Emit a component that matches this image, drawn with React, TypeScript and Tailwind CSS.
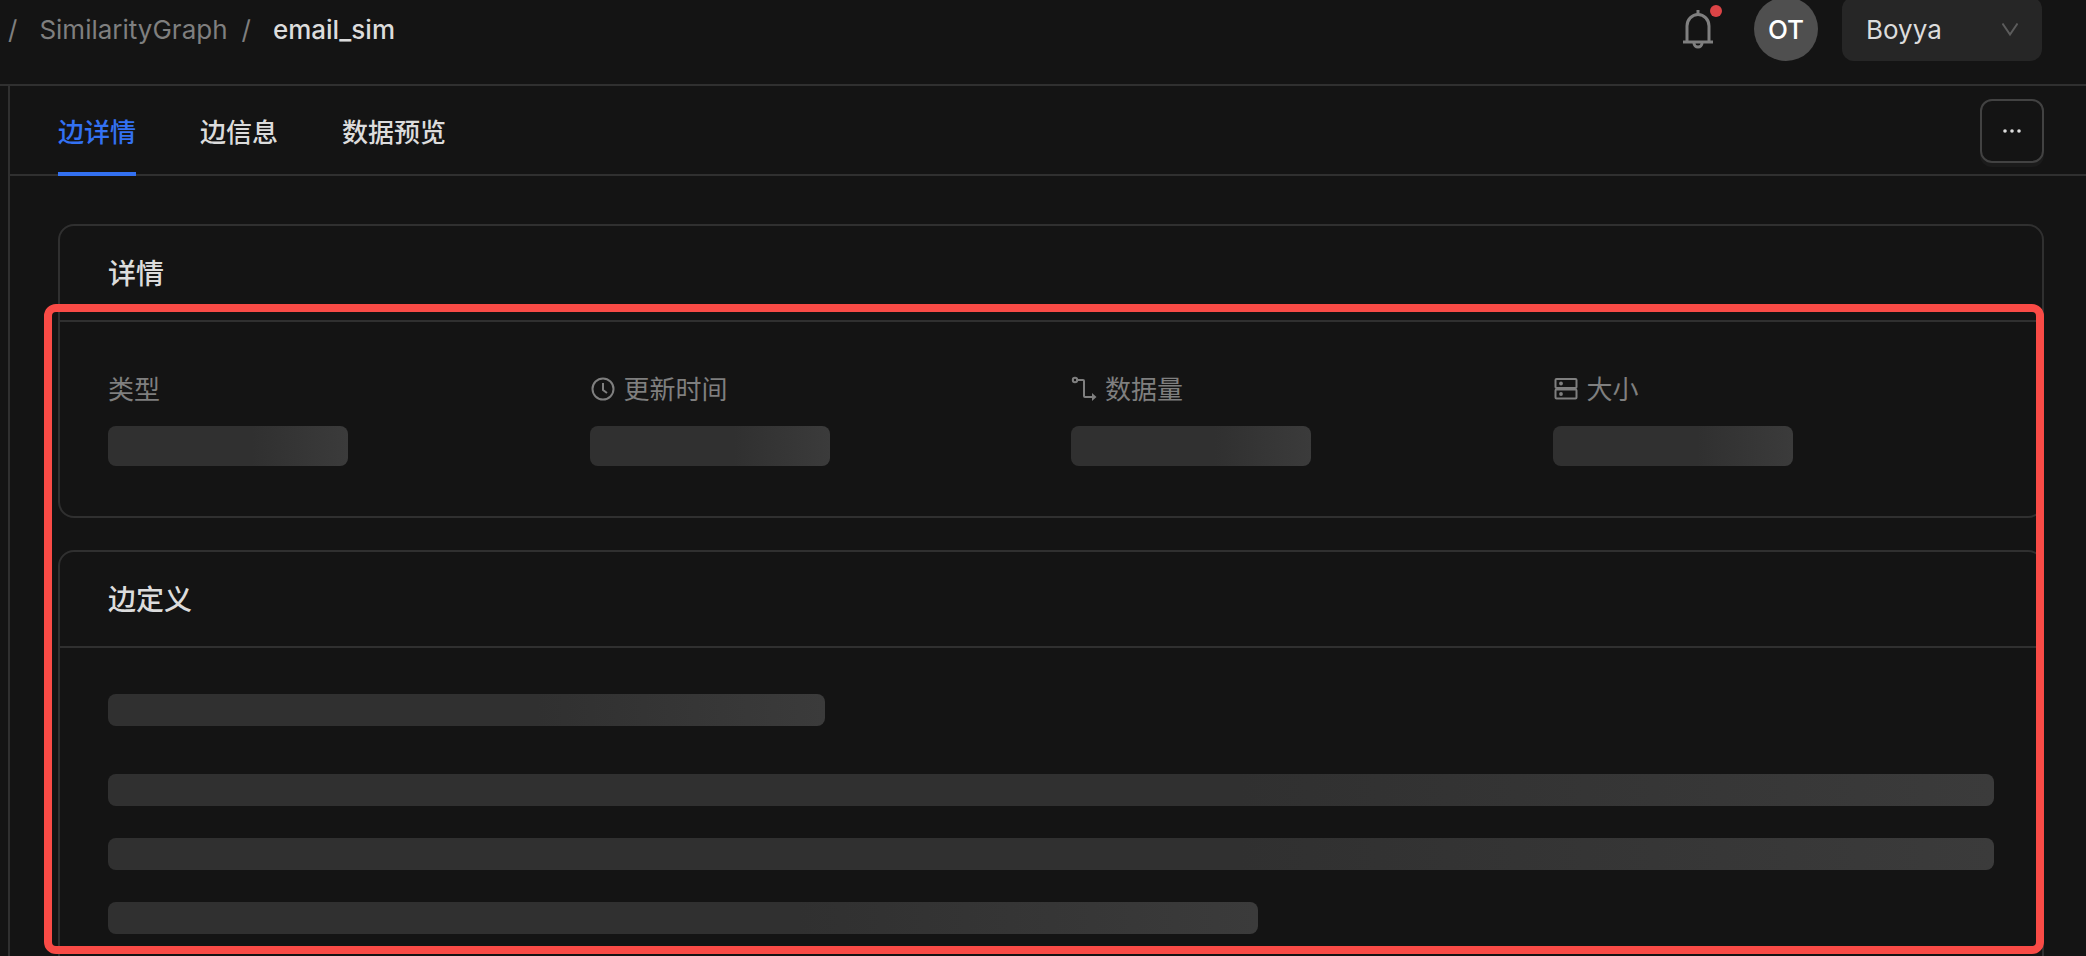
import React, { useState } from 'react';

const BellIcon = () => (
  <svg width="32" height="40" viewBox="0 0 32 40" fill="none" stroke="currentColor" strokeWidth="3">
    <path d="M16 1v5" />
    <path d="M5 33V17a11 11.500 0 0 1 22 0V33" />
    <path d="M1 33h30" />
    <path d="M12 34a4 4 0 0 0 8 0" />
  </svg>
)

const ClockIcon = () => (
  <svg width="26" height="26" viewBox="0 0 26 26" fill="none" stroke="currentColor" strokeWidth="2">
    <circle cx="13" cy="13" r="10.500" />
    <path d="M13 7v7l4 3" />
  </svg>
)

const FlowIcon = () => (
  <svg width="26" height="26" viewBox="0 0 26 26" fill="none" stroke="currentColor" strokeWidth="2">
    <circle cx="4" cy="4" r="2.200" />
    <path d="M6.500 4H12a1 1 0 0 1 1 1v15a1 1 0 0 0 1 1h8" />
    <path d="M21 17l4.500 4-4.500 4z" fill="currentColor" stroke="none" />
  </svg>
)

const ServerIcon = () => (
  <svg width="26" height="26" viewBox="0 0 26 26" fill="none" stroke="currentColor" strokeWidth="2">
    <rect x="2.500" y="3" width="21" height="9" rx="1" />
    <rect x="2.500" y="13.500" width="21" height="9" rx="1" />
    <circle cx="8" cy="7.500" r="1.900" fill="currentColor" stroke="none" />
    <circle cx="8" cy="18" r="1.900" fill="currentColor" stroke="none" />
  </svg>
)

const Skeleton = ({ className }: { className: string }) => (
  <div className={`rounded-lg bg-linear-to-r from-[#303030] from-60% to-[#3b3b3b] ${className}`} />
)

const Card = ({ title, children }: { title: string, children: React.ReactNode }) => (
  <section className="rounded-2xl border-2 border-[#303030]">
    <h2 className="flex h-24 items-center border-b-2 border-[#303030] px-12 pt-0.5 text-[28px] font-medium text-[#dcdcdc]">{title}</h2>
    {children}
  </section>
)

const tabs = ["边详情", "边信息", "数据预览"]

const fields = [
  { label: "类型", icon: null },
  { label: "更新时间", icon: <ClockIcon /> },
  { label: "数据量", icon: <FlowIcon /> },
  { label: "大小", icon: <ServerIcon /> },
]

const App = (): React.JSX.Element => {
  const [activeTab, setActiveTab] = useState<string>(tabs[0])

  return (
    <div className="relative flex h-screen flex-col overflow-hidden bg-[#141414] font-[Inter,'Noto_Sans_CJK_SC',sans-serif] text-[26px] text-[#dcdcdc]">
      <header className="-mt-[26px] flex h-28 shrink-0 items-center justify-between border-b-2 border-[#303030] pr-11 pl-2">
        <nav className="flex items-center gap-3.5 text-[#7f7f7f]">
          <span className="mr-2">/</span>
          <a href="#graph">SimilarityGraph</a>
          <span className="mr-2">/</span>
          <span className="font-medium text-[#dcdcdc]">email_sim</span>
        </nav>
        <div className="flex items-center">
          <button className="relative mr-10 text-[#7f7f7f]" aria-label="通知">
            <BellIcon />
            <span className="absolute -top-1 -right-2 size-3 rounded-full bg-[#dc4446]" />
          </button>
          <div className="mr-6 flex size-16 items-center justify-center rounded-full bg-[#4f4f4f] font-medium text-white">OT</div>
          <div className="relative">
            <select aria-label="Boyya" className="h-16 w-50 appearance-none rounded-xl bg-[#262626] px-6">
              <option>Boyya</option>
            </select>
            <svg className="pointer-events-none absolute top-6 right-6 text-[#5c5c5c]" width="16" height="16" viewBox="0 0 16 16" fill="none" stroke="currentColor" strokeWidth="2">
              <path d="M0.500 2.500l7.500 11 7.500-11" />
            </svg>
          </div>
        </div>
      </header>

      <main className="ml-2 min-h-0 flex-1 border-l-2 border-[#303030]">
        <div className="flex h-[90px] items-center justify-between border-b-2 border-[#303030] pr-[42px] pl-12">
          <div className="flex h-full gap-16" role="tablist">
            {tabs.map((tab) => (
              <button
                key={tab}
                role="tab"
                aria-selected={activeTab === tab}
                onClick={() => setActiveTab(tab)}
                className={`-mb-0.5 border-b-4 pt-1.5 font-medium ${activeTab === tab ? "border-[#3371f2] text-[#3371f2]" : "border-transparent"}`}
              >
                {tab}
              </button>
            ))}
          </div>
          <button className="mt-0.5 flex size-16 items-center justify-center rounded-xl border-2 border-[#424242] shadow-[0_4px_0_#1b1b1b]" aria-label="更多">
            <svg width="18" height="4" viewBox="0 0 18 4" fill="currentColor">
              <circle cx="2" cy="2" r="1.800" />
              <circle cx="9" cy="2" r="1.800" />
              <circle cx="16" cy="2" r="1.800" />
            </svg>
          </button>
        </div>

        <div className="flex flex-col gap-8 pt-12 pr-[42px] pl-12">
          <Card title="详情">
            <div className="grid grid-cols-4 gap-10 px-12 pt-[46px] pb-[50px]">
              {fields.map(({ label, icon }) => (
                <div key={label}>
                  <div className="mb-4 flex h-[42px] items-center gap-2 text-[#7f7f7f]">
                    {icon}
                    <span>{label}</span>
                  </div>
                  <Skeleton className="h-10 w-60" />
                </div>
              ))}
            </div>
          </Card>

          <Card title="边定义">
            <div className="flex flex-col gap-8 px-12 pt-[46px] pb-12">
              <Skeleton className="mb-4 h-8 w-[38%]" />
              <Skeleton className="h-8" />
              <Skeleton className="h-8" />
              <Skeleton className="h-8 w-[61%]" />
            </div>
          </Card>
        </div>
      </main>

      <div className="pointer-events-none absolute top-76 right-[42px] bottom-0.5 left-11 rounded-xl border-8 border-[#fa4b46]" />
    </div>
  );
};

export default App;
